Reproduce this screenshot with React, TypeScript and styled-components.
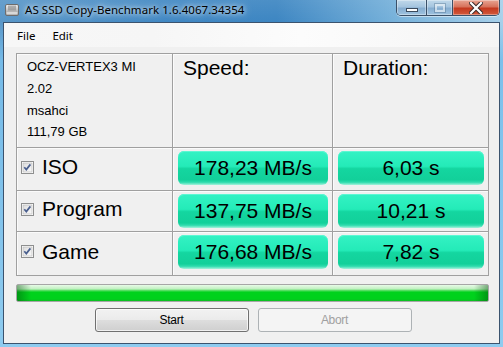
import styled, { createGlobalStyle } from "styled-components";

const GlobalStyle = createGlobalStyle`
  html, body {
    margin: 0;
    padding: 0;
    width: 503px;
    height: 347px;
    overflow: hidden;
    background: #8fc8ea;
  }
  * {
    box-sizing: border-box;
  }
`;

const rows = [
  { name: "ISO", speed: "178,23 MB/s", duration: "6,03 s" },
  { name: "Program", speed: "137,75 MB/s", duration: "10,21 s" },
  { name: "Game", speed: "176,68 MB/s", duration: "7,82 s" },
];

const info = ["OCZ-VERTEX3 MI", "2.02", "msahci", "111,79 GB"];

function DriveIcon() {
  return (
    <svg width="14" height="14" viewBox="0 0 14 14">
      <defs>
        <linearGradient id="drv" x1="0" y1="0" x2="0" y2="1">
          <stop offset="0" stopColor="#f2f2f2" />
          <stop offset="0.6" stopColor="#b9b9b9" />
          <stop offset="1" stopColor="#8a8a8a" />
        </linearGradient>
      </defs>
      <rect x="0.5" y="1.5" width="13" height="11" rx="1.5" fill="url(#drv)" stroke="#6d6d6d" />
      <path d="M4 2.5v5M6 2.5v5M8 2.5v5M10 2.5v5" stroke="#7a7a7a" strokeWidth="1" />
      <rect x="1.5" y="9" width="11" height="2.5" fill="#d8d8d8" />
    </svg>
  );
}

function CheckBox() {
  return (
    <svg width="13" height="13" viewBox="0 0 13 13">
      <defs>
        <linearGradient id="cbx" x1="0" y1="0" x2="1" y2="1">
          <stop offset="0" stopColor="#dcdcdc" />
          <stop offset="1" stopColor="#fbfbfb" />
        </linearGradient>
      </defs>
      <rect x="0.5" y="0.5" width="12" height="12" fill="#fff" stroke="#8e8f8f" />
      <rect x="2" y="2" width="9" height="9" fill="url(#cbx)" stroke="#b4b4b4" strokeWidth="0.6" />
      <path d="M3.3 6.3 L5.3 8.6 L9.4 3.4" fill="none" stroke="#4a5f8e" strokeWidth="1.7" />
    </svg>
  );
}

export default function App() {
  return (
    <>
      <GlobalStyle />
      <Window>
        <TitleBar>
          <TitleIcon>
            <DriveIcon />
          </TitleIcon>
          <Title>AS SSD Copy-Benchmark 1.6.4067.34354</Title>
          <Caption>
            <CapButton kind="min">
              <MinGlyph />
            </CapButton>
            <CapButton kind="max">
              <MaxGlyph />
            </CapButton>
            <CapButton kind="close">
              <svg width="14" height="12" viewBox="0 0 14 12">
                <path
                  d="M2 1 L12 11 M12 1 L2 11"
                  stroke="#3b2a2a"
                  strokeWidth="4.2"
                  strokeLinecap="square"
                />
                <path
                  d="M2 1 L12 11 M12 1 L2 11"
                  stroke="#ffffff"
                  strokeWidth="2.2"
                  strokeLinecap="square"
                />
              </svg>
            </CapButton>
          </Caption>
        </TitleBar>
        <Client>
          <MenuBar>
            <MenuItem>File</MenuItem>
            <MenuItem>Edit</MenuItem>
          </MenuBar>
          <Body>
            <Grid>
              <Cell>
                <InfoList>
                  {info.map((line) => (
                    <InfoLine key={line}>{line}</InfoLine>
                  ))}
                </InfoList>
              </Cell>
              <Cell>
                <Heading>Speed:</Heading>
              </Cell>
              <Cell>
                <Heading>Duration:</Heading>
              </Cell>
              {rows.map((r) => (
                <RowGroup key={r.name}>
                  <LabelCell>
                    <CheckBox />
                    <Label>{r.name}</Label>
                  </LabelCell>
                  <ValueCell>
                    <ValueBox>{r.speed}</ValueBox>
                  </ValueCell>
                  <ValueCell>
                    <ValueBox>{r.duration}</ValueBox>
                  </ValueCell>
                </RowGroup>
              ))}
            </Grid>
            <Progress />
            <Buttons>
              <Button>Start</Button>
              <Button disabled>Abort</Button>
            </Buttons>
          </Body>
        </Client>
      </Window>
    </>
  );
}

const Window = styled.div`
  width: 503px;
  height: 347px;
  display: flex;
  flex-direction: column;
  padding: 0 3px 3px 3px;
  background:
    linear-gradient(180deg, rgba(255, 255, 255, 0.08) 0px, rgba(255, 255, 255, 0) 22px, rgba(120, 190, 235, 0.9) 60px, #8ecbef 100%),
    linear-gradient(90deg, #5a97c8 0%, #3f87c3 35%, #3d86c2 55%, #7ab4dc 80%, #a7d0ea 100%);
`;

const TitleBar = styled.div`
  height: 22px;
  display: flex;
  align-items: flex-start;
  font-family: "Noto Sans", "Open Sans", sans-serif;
`;

const TitleIcon = styled.div`
  margin: 3px 0 0 2px;
  width: 14px;
  height: 14px;
  display: flex;
`;

const Title = styled.div`
  margin: 2px 0 0 6px;
  font-size: 11.5px;
  line-height: 16px;
  color: #000;
  text-shadow: 0 0 8px rgba(255, 255, 255, 0.9), 0 0 4px rgba(255, 255, 255, 0.7);
  letter-spacing: 0.05px;
`;

const Caption = styled.div`
  margin-left: auto;
  display: flex;
  height: 16px;
  border: 1px solid #3a5068;
  border-top: none;
  border-radius: 0 0 5px 5px;
  overflow: hidden;
  box-shadow: 0 1px 0 rgba(255, 255, 255, 0.5);
`;

const CapButton = styled.div<{ kind: "min" | "max" | "close" }>`
  width: ${(p) => (p.kind === "min" ? 29 : p.kind === "max" ? 26 : 47)}px;
  height: 100%;
  display: flex;
  align-items: center;
  justify-content: center;
  border-left: ${(p) => (p.kind === "min" ? "none" : "1px solid #3a5068")};
  background: ${(p) =>
    p.kind === "close"
      ? "linear-gradient(180deg, #e8a593 0%, #d7735c 45%, #c4391f 55%, #d35a3c 100%)"
      : "linear-gradient(180deg, #c0d8ea 0%, #a5c5df 45%, #86add0 55%, #9ec3e0 100%)"};
  box-shadow: inset 0 0 0 1px rgba(255, 255, 255, 0.35);
`;

const MinGlyph = styled.div`
  width: 12px;
  height: 4px;
  margin-top: 5px;
  background: #fff;
  border: 1px solid #3a4a5c;
`;

const MaxGlyph = styled.div`
  width: 10px;
  height: 8px;
  border: 2px solid rgba(255, 255, 255, 0.55);
  outline: 1px solid rgba(70, 100, 130, 0.35);
`;

const Client = styled.div`
  flex: 1;
  display: flex;
  flex-direction: column;
  background: #f0f0f0;
  border: 1px solid #3b536e;
  font-family: "Liberation Sans", Arial, sans-serif;
`;

const MenuBar = styled.div`
  height: 24px;
  display: flex;
  align-items: center;
  gap: 17px;
  padding: 1px 0 0 13px;
  background: linear-gradient(90deg, #f7f7f7 0%, #f6f6f6 30%, #fcfcfc 60%, #f5f5f5 100%);
  font-family: "Noto Sans", "Open Sans", sans-serif;
  font-size: 11.5px;
  color: #000;
`;

const MenuItem = styled.span``;

const Body = styled.div`
  flex: 1;
  display: flex;
  flex-direction: column;
  padding: 6px 11px 0 12px;
`;

const Grid = styled.div`
  display: grid;
  grid-template-columns: 155px 159px 155px;
  grid-template-rows: 93px 42px 40px 43px;
  gap: 1px;
  width: 473px;
  border: 1px solid #a0a0a0;
  background: #a0a0a0;
`;

const RowGroup = styled.div`
  display: contents;
`;

const Cell = styled.div`
  background: #f0f0f0;
  box-shadow: inset 1px 1px 0 #fbfbfb;
`;

const InfoList = styled.div`
  padding: 2px 0 0 10px;
  display: flex;
  flex-direction: column;
`;

const InfoLine = styled.div`
  font-size: 13px;
  line-height: 22px;
  color: #000;
  &:last-child {
    line-height: 19px;
  }
`;

const Heading = styled.div`
  padding: 1px 0 0 10px;
  font-size: 21px;
  line-height: 26px;
  color: #000;
`;

const LabelCell = styled(Cell)`
  display: flex;
  align-items: center;
  padding: 0 0 4px 4px;
  gap: 8px;
  svg {
    flex: none;
  }
`;

const Label = styled.span`
  font-size: 21px;
  line-height: 24px;
  color: #000;
`;

const ValueCell = styled(Cell)`
  display: flex;
  padding: 3px 4px 3px 5px;
`;

const ValueBox = styled.div`
  flex: 1;
  height: 34px;
  display: flex;
  align-items: center;
  justify-content: center;
  border-radius: 6px;
  font-size: 21px;
  color: #000;
  background: linear-gradient(
    180deg,
    #34f2c4 0%,
    #24ebb8 45%,
    #14d6a0 52%,
    #12d09a 85%,
    #2fdcae 92%,
    #a6f3dc 100%
  );
  box-shadow: inset 0 1px 0 #5ef7d3;
`;

const Progress = styled.div`
  margin-top: 8px;
  width: 473px;
  height: 18px;
  border: 1px solid #a6a6a6;
  border-radius: 2px;
  background:
    linear-gradient(90deg, rgba(0, 80, 10, 0.45) 0px, rgba(0, 80, 10, 0) 14px, rgba(0, 80, 10, 0) calc(100% - 14px), rgba(0, 80, 10, 0.45) 100%),
    linear-gradient(180deg, #e8fbe8 0%, #bff0bf 25%, #4fdc5c 35%, #00d21c 45%, #00d11c 85%, #0bbf22 100%);
`;

const Buttons = styled.div`
  margin-top: 6px;
  display: flex;
  justify-content: center;
  gap: 9px;
  padding-left: 2px;
`;

const Button = styled.button`
  width: 154px;
  height: 24px;
  padding: 0;
  font-family: "Liberation Sans", Arial, sans-serif;
  font-size: 12px;
  letter-spacing: -0.3px;
  border-radius: 3px;
  color: #000;
  border: 1px solid #707070;
  background: linear-gradient(180deg, #f2f2f2 0%, #ebebeb 48%, #dddddd 52%, #cfcfcf 100%);
  box-shadow: inset 0 0 0 1px rgba(255, 255, 255, 0.7);
  &:disabled {
    color: #a0a0a0;
    border-color: #adb2b5;
    background: #f4f4f4;
    box-shadow: none;
  }
`;
